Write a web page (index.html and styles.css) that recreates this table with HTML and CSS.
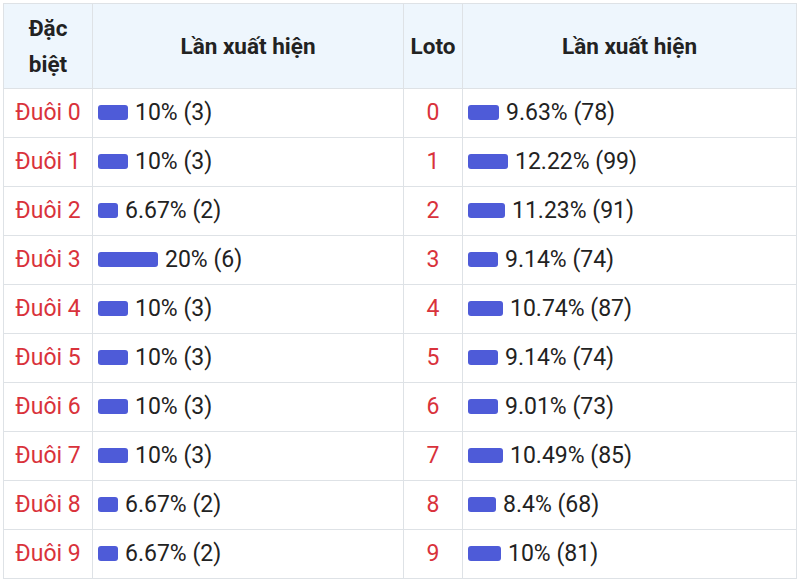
FILE: index.html
```html
<!DOCTYPE html>
<html lang="vi">
<head>
<meta charset="utf-8">
<link rel="stylesheet" href="styles.css">
</head>
<body>
<div class="wrap">
<table class="stats">
  <colgroup>
    <col class="c1"><col class="c2"><col class="c3"><col class="c4">
  </colgroup>
  <thead>
    <tr><th>Đặc biệt</th><th>Lần xuất hiện</th><th>Loto</th><th>Lần xuất hiện</th></tr>
  </thead>
  <tbody>
    <tr><td class="key">Đuôi 0</td><td class="val"><span class="bar" style="width:30px"></span>10% (3)</td><td class="key">0</td><td class="val"><span class="bar" style="width:31px"></span>9.63% (78)</td></tr>
    <tr><td class="key">Đuôi 1</td><td class="val"><span class="bar" style="width:30px"></span>10% (3)</td><td class="key">1</td><td class="val"><span class="bar" style="width:40px"></span>12.22% (99)</td></tr>
    <tr><td class="key">Đuôi 2</td><td class="val"><span class="bar" style="width:20px"></span>6.67% (2)</td><td class="key">2</td><td class="val"><span class="bar" style="width:37px"></span>11.23% (91)</td></tr>
    <tr><td class="key">Đuôi 3</td><td class="val"><span class="bar" style="width:60px"></span>20% (6)</td><td class="key">3</td><td class="val"><span class="bar" style="width:30px"></span>9.14% (74)</td></tr>
    <tr><td class="key">Đuôi 4</td><td class="val"><span class="bar" style="width:30px"></span>10% (3)</td><td class="key">4</td><td class="val"><span class="bar" style="width:35px"></span>10.74% (87)</td></tr>
    <tr><td class="key">Đuôi 5</td><td class="val"><span class="bar" style="width:30px"></span>10% (3)</td><td class="key">5</td><td class="val"><span class="bar" style="width:30px"></span>9.14% (74)</td></tr>
    <tr><td class="key">Đuôi 6</td><td class="val"><span class="bar" style="width:30px"></span>10% (3)</td><td class="key">6</td><td class="val"><span class="bar" style="width:30px"></span>9.01% (73)</td></tr>
    <tr><td class="key">Đuôi 7</td><td class="val"><span class="bar" style="width:30px"></span>10% (3)</td><td class="key">7</td><td class="val"><span class="bar" style="width:35px"></span>10.49% (85)</td></tr>
    <tr><td class="key">Đuôi 8</td><td class="val"><span class="bar" style="width:20px"></span>6.67% (2)</td><td class="key">8</td><td class="val"><span class="bar" style="width:28px"></span>8.4% (68)</td></tr>
    <tr><td class="key">Đuôi 9</td><td class="val"><span class="bar" style="width:20px"></span>6.67% (2)</td><td class="key">9</td><td class="val"><span class="bar" style="width:33px"></span>10% (81)</td></tr>
  </tbody>
</table>
</div>
</body>
</html>
```

FILE: styles.css
```css
html, body {
  margin: 0;
  padding: 0;
  background: #ffffff;
}
.wrap {
  padding: 3px 0 0 3px;
}
.stats {
  width: 793px;
  border-collapse: collapse;
  table-layout: fixed;
  font-family: Roboto, "Liberation Sans", sans-serif;
  color: #222222;
}
.c1 { width: 89px; }
.c2 { width: 311px; }
.c3 { width: 59px; }
.c4 { width: 334px; }
.stats th, .stats td {
  border: 1px solid #dee2e6;
}
.stats th {
  background: #eef6fd;
  font-weight: bold;
  font-size: 22.5px;
  line-height: 36px;
  padding: 6px 4px;
  height: 72px;
  text-align: center;
}
.stats td {
  font-size: 23px;
  line-height: 32px;
  padding: 8px 5px;
  height: 32px;
}
.stats td.key {
  color: #d9323b;
  text-align: center;
  padding: 8px 2px;
}
.bar {
  display: inline-block;
  height: 15px;
  background: #4e5bd8;
  border-radius: 3px;
  margin-right: 7px;
}
```
